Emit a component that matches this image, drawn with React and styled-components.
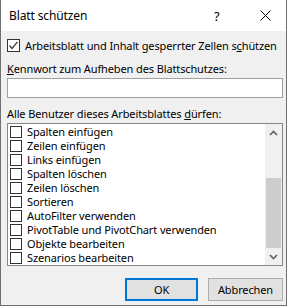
import React from "react"
import styled, { createGlobalStyle } from "styled-components"

const GlobalStyle = createGlobalStyle`
  html, body {
    margin: 0;
    padding: 0;
    background: #ffffff;
  }
  body {
    font-family: "Noto Sans", "Open Sans", sans-serif;
    font-size: 11px;
    letter-spacing: -0.12px;
    color: #000;
  }
`

const items = [
  "Spalten einfügen",
  "Zeilen einfügen",
  "Links einfügen",
  "Spalten löschen",
  "Zeilen löschen",
  "Sortieren",
  "AutoFilter verwenden",
  "PivotTable und PivotChart verwenden",
  "Objekte bearbeiten",
  "Szenarios bearbeiten",
]

const App = () => {
  return (
    <>
      <GlobalStyle />
      <Window>
        <TitleBar>
          <Title>Blatt schützen</Title>
          <HelpButton>?</HelpButton>
          <CloseButton>
            <svg width="11" height="11" viewBox="0 0 11 11">
              <path d="M0.5 0.5 L10.5 10.5 M10.5 0.5 L0.5 10.5" stroke="#000" strokeWidth="1" />
            </svg>
          </CloseButton>
        </TitleBar>
        <Body>
          <CheckRow>
            <Box size={13}>
              <svg width="11" height="11" viewBox="0 0 11 11">
                <path d="M1.5 5.5 L4 8.5 L9.5 1.8" fill="none" stroke="#333" strokeWidth="1.2" />
              </svg>
            </Box>
            <span>
              Arbeitsblatt und Inhalt gesperrter Zellen s<u>c</u>hützen
            </span>
          </CheckRow>
          <Label top={9}>
            <u>K</u>ennwort zum Aufheben des Blattschutzes:
          </Label>
          <TextInput />
          <Label top={8}>
            Alle Benutzer dieses Arbeitsblattes <u>d</u>ürfen:
          </Label>
          <ListBox>
            <ListItems>
              {items.map(item => (
                <ListItem key={item}>
                  <Box size={12} />
                  <span>{item}</span>
                </ListItem>
              ))}
            </ListItems>
            <ScrollBar>
              <ArrowButton>
                <svg width="9" height="6" viewBox="0 0 9 6">
                  <path d="M1 5 L4.5 1.5 L8 5" fill="none" stroke="#606060" strokeWidth="1.6" />
                </svg>
              </ArrowButton>
              <Track>
                <Thumb />
              </Track>
              <ArrowButton>
                <svg width="9" height="6" viewBox="0 0 9 6">
                  <path d="M1 1 L4.5 4.5 L8 1" fill="none" stroke="#606060" strokeWidth="1.6" />
                </svg>
              </ArrowButton>
            </ScrollBar>
          </ListBox>
          <ButtonRow>
            <Button primary width={73}>OK</Button>
            <Button width={75}>Abbrechen</Button>
          </ButtonRow>
        </Body>
      </Window>
    </>
  )
}

const Window = styled.div`
  width: 287px;
  height: 306px;
  box-sizing: border-box;
  background: #f0f0f0;
  border: 1px solid #707070;
  border-top: none;
  display: flex;
  flex-direction: column;
`

const TitleBar = styled.div`
  height: 31px;
  background: #ffffff;
  display: flex;
  align-items: center;
  padding-left: 8px;
`

const Title = styled.div`
  flex: 1;
  font-size: 12px;
  line-height: 16px;
`

const HelpButton = styled.div`
  width: 10px;
  margin-right: 36px;
  font-size: 13px;
  line-height: 16px;
`

const CloseButton = styled.div`
  display: flex;
  margin-right: 15px;
`

const Body = styled.div`
  flex: 1;
  display: flex;
  flex-direction: column;
  padding: 0 3px 0 6px;
`

const CheckRow = styled.div`
  display: flex;
  align-items: center;
  gap: 5px;
  height: 13px;
  margin-top: 8px;
  line-height: 16px;
  white-space: nowrap;
`

const Box = styled.span`
  width: ${props => props.size}px;
  height: ${props => props.size}px;
  box-sizing: border-box;
  border: 1px solid #333333;
  background: #ffffff;
  display: flex;
  align-items: center;
  justify-content: center;
  flex-shrink: 0;
`

const Label = styled.div`
  margin-top: ${props => props.top}px;
  line-height: 16px;
  height: 16px;
  white-space: nowrap;
`

const TextInput = styled.div`
  margin-top: 1px;
  height: 20px;
  box-sizing: border-box;
  border: 1px solid #a0a0a0;
  background: #ffffff;
`

const ListBox = styled.div`
  margin-top: 1px;
  height: 143px;
  box-sizing: border-box;
  border: 1px solid #828790;
  background: #ffffff;
  display: flex;
  overflow: hidden;
`

const ListItems = styled.div`
  flex: 1;
  padding: 1px 0 0 2px;
  overflow: hidden;
`

const ListItem = styled.div`
  height: 14px;
  display: flex;
  align-items: center;
  gap: 5px;
  line-height: 14px;
  white-space: nowrap;
`

const ScrollBar = styled.div`
  width: 17px;
  background: #f0f0f0;
  display: flex;
  flex-direction: column;
`

const ArrowButton = styled.div`
  height: 17px;
  display: flex;
  align-items: center;
  justify-content: center;
`

const Track = styled.div`
  flex: 1;
  display: flex;
  flex-direction: column;
  justify-content: flex-end;
`

const Thumb = styled.div`
  height: 70px;
  margin: 0 1px;
  background: #cdcdcd;
`

const ButtonRow = styled.div`
  margin-top: 12px;
  display: flex;
  justify-content: flex-end;
  gap: 10px;
`

const Button = styled.div`
  width: ${props => props.width}px;
  height: 23px;
  box-sizing: border-box;
  background: #e1e1e1;
  border: ${props => (props.primary ? "2px solid #0078d7" : "1px solid #adadad")};
  display: flex;
  align-items: center;
  justify-content: center;
  line-height: 16px;
`

export default App
